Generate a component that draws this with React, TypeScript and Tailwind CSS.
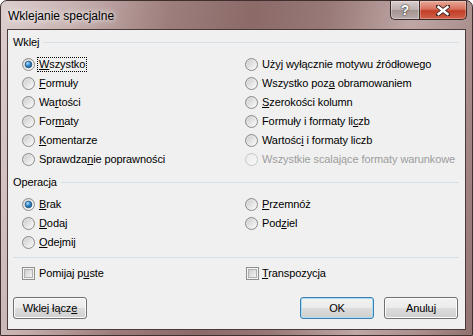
import React, { useId } from 'react';

const FONT = { fontFamily: '"Liberation Sans", Arial, sans-serif' };

function Radio({ checked = false, disabled = false }: { checked?: boolean; disabled?: boolean }) {
  const id = useId();
  return (
    <svg width="13" height="13" viewBox="0 0 13 13" className="shrink-0">
      <defs>
        <linearGradient id={`${id}o`} x1="0" y1="0" x2="1" y2="1">
          <stop offset="0" stopColor={disabled ? '#e8e8e8' : '#d2d2d2'} />
          <stop offset="1" stopColor="#fbfbfb" />
        </linearGradient>
        <linearGradient id={`${id}i`} x1="0" y1="0" x2="1" y2="1">
          <stop offset="0" stopColor={disabled ? '#ececec' : '#cfcfcf'} />
          <stop offset="1" stopColor="#f7f7f7" />
        </linearGradient>
        <radialGradient id={`${id}d`} cx="0.35" cy="0.3" r="0.8">
          <stop offset="0" stopColor="#b6e3fb" />
          <stop offset="0.45" stopColor="#3d8fd0" />
          <stop offset="1" stopColor="#0f4f86" />
        </radialGradient>
      </defs>
      <circle cx="6.5" cy="6.5" r="6" fill={`url(#${id}o)`} stroke={disabled ? '#c6c6c6' : '#8a8a8a'} />
      {checked ? (
        <circle cx="6.5" cy="6.5" r="3.3" fill={`url(#${id}d)`} stroke="#1c4f7d" strokeWidth="0.8" />
      ) : (
        <circle cx="6.5" cy="6.5" r="4" fill={`url(#${id}i)`} />
      )}
    </svg>
  );
}

function Checkbox() {
  const id = useId();
  return (
    <svg width="13" height="13" viewBox="0 0 13 13" className="shrink-0">
      <defs>
        <linearGradient id={id} x1="0" y1="0" x2="1" y2="1">
          <stop offset="0" stopColor="#cbcbcb" />
          <stop offset="1" stopColor="#f6f6f6" />
        </linearGradient>
      </defs>
      <rect x="0.5" y="0.5" width="12" height="12" fill="#f4f4f4" stroke="#8e8f8f" />
      <rect x="2.5" y="2.5" width="8" height="8" fill={`url(#${id})`} stroke="#b0b0b0" />
    </svg>
  );
}

// label with one underlined access key
function L({ pre, k, post }: { pre?: string; k?: string; post?: string }) {
  return (
    <span className="whitespace-nowrap">
      {pre}
      {k && <u>{k}</u>}
      {post}
    </span>
  );
}

function RadioRow({ children, checked, disabled, focus }: { children: React.ReactNode; checked?: boolean; disabled?: boolean; focus?: boolean }) {
  return (
    <div className={`flex h-[19px] items-center ${focus ? 'gap-[2px]' : 'gap-[4px]'} ${disabled ? 'text-[#9d9d9d]' : 'text-black'}`}>
      <Radio checked={checked} disabled={disabled} />
      {focus ? (
        <span className="border border-dotted border-black px-[1px] leading-[13px]">{children}</span>
      ) : (
        children
      )}
    </div>
  );
}

function GroupHeader({ title }: { title: string }) {
  return (
    <div className="flex h-[14px] items-center gap-[4px] pl-[5px] pr-[6px]">
      <span>{title}</span>
      <div className="h-px flex-1 bg-[#d5dfe5]" />
    </div>
  );
}

function WinButton({ children, isDefault }: { children: React.ReactNode; isDefault?: boolean }) {
  return (
    <button
      className={`flex h-[22px] w-[74px] items-center justify-center rounded-[3px] border bg-[linear-gradient(#f2f2f2_0%,#ebebeb_50%,#dddddd_51%,#cfcfcf_100%)] text-black ${
        isDefault
          ? 'border-[#3c7fb1] shadow-[inset_0_0_0_1px_#a9dcf6]'
          : 'border-[#707070] shadow-[inset_0_0_0_1px_#fcfcfc]'
      }`}
    >
      {children}
    </button>
  );
}

export default function App() {
  return (
    <div
      className="flex h-[336px] w-[473px] flex-col rounded-t-[7px] border border-[#3f302f] bg-[linear-gradient(100deg,#dccfce_0%,#c7b2b0_14%,#9d7e7c_32%,#8b6a68_48%,#987977_62%,#bea7a5_78%,#aa8f8d_90%,#917270_100%)] text-[11px] tracking-[-0.1px]"
      style={FONT}
    >
      {/* title bar */}
      <div className="flex h-[28px] shrink-0 items-start">
        <div className="ml-[7px] mt-[6px] text-[12px] tracking-normal text-black [text-shadow:0_0_8px_#fff,0_0_4px_#ffffffcc]">
          Wklejanie specjalne
        </div>
        <div className="ml-auto mr-[5px] flex">
          <div className="flex h-[19px] w-[29px] items-center justify-center rounded-bl-[5px] border border-t-0 border-r-0 border-[#3a2c2b] bg-[linear-gradient(#d9cfce_0%,#bcaeac_50%,#a39391_51%,#b9abaa_100%)] shadow-[inset_0_0_0_1px_#ffffff55]">
            <span className="text-[14px] font-bold leading-none text-white [text-shadow:0_0_1px_#222,0_0_2px_#333]">?</span>
          </div>
          <div className="flex h-[19px] w-[48px] items-center justify-center rounded-br-[5px] border border-t-0 border-[#3a2c2b] bg-[linear-gradient(#e8a898_0%,#d8705c_45%,#c23d25_55%,#d0614b_100%)] shadow-[inset_0_0_0_1px_#ffffff44]">
            <svg width="14" height="11" viewBox="0 0 14 11">
              <path d="M2 1.5 L12 9.5 M12 1.5 L2 9.5" stroke="#3b2522" strokeWidth="4.2" strokeLinecap="square" />
              <path d="M2.5 2 L11.5 9 M11.5 2 L2.5 9" stroke="#ffffff" strokeWidth="2.4" strokeLinecap="square" />
            </svg>
          </div>
        </div>
      </div>

      {/* client area */}
      <div className="mx-[6px] mb-[5px] flex flex-1 flex-col border border-[#4a3a39] bg-[#f0f0f0] text-black">
        <div className="mt-[5px]">
          <GroupHeader title="Wklej" />
        </div>
        <div className="mt-[6px] grid grid-cols-[223px_1fr] pl-[14px]">
          <div className="flex flex-col">
            <RadioRow checked focus><L k="W" post="szystko" /></RadioRow>
            <RadioRow><L k="F" post="ormuły" /></RadioRow>
            <RadioRow><L pre="Wa" k="r" post="tości" /></RadioRow>
            <RadioRow><L pre="For" k="m" post="aty" /></RadioRow>
            <RadioRow><L k="K" post="omentarze" /></RadioRow>
            <RadioRow><L pre="Sprawdza" k="n" post="ie poprawności" /></RadioRow>
          </div>
          <div className="flex flex-col">
            <RadioRow><L pre="Uży" k="j" post=" wyłącznie motywu źródłowego" /></RadioRow>
            <RadioRow><L pre="Wszystko poz" k="a" post=" obramowaniem" /></RadioRow>
            <RadioRow><L k="S" post="zerokości kolumn" /></RadioRow>
            <RadioRow><L pre="Formuły i formaty li" k="c" post="zb" /></RadioRow>
            <RadioRow><L pre="Wartośc" k="i" post=" i formaty liczb" /></RadioRow>
            <RadioRow disabled><L pre="Wszystkie scalające formaty warunkowe" /></RadioRow>
          </div>
        </div>

        <div className="mt-[6px]">
          <GroupHeader title="Operacja" />
        </div>
        <div className="mt-[6px] grid grid-cols-[223px_1fr] pl-[14px]">
          <div className="flex flex-col">
            <RadioRow checked><L k="B" post="rak" /></RadioRow>
            <RadioRow><L k="D" post="odaj" /></RadioRow>
            <RadioRow><L k="O" post="dejmij" /></RadioRow>
          </div>
          <div className="flex flex-col">
            <RadioRow><L k="P" post="rzemnóż" /></RadioRow>
            <RadioRow><L pre="Pod" k="z" post="iel" /></RadioRow>
          </div>
        </div>

        <div className="ml-[5px] mr-[6px] mt-[5px] h-px bg-[#d5dfe5]" />

        <div className="mt-[6px] grid grid-cols-[224px_1fr] pl-[14px]">
          <div className="flex h-[19px] items-center gap-[4px]">
            <Checkbox />
            <L pre="Pomijaj p" k="u" post="ste" />
          </div>
          <div className="flex h-[19px] items-center gap-[3px]">
            <Checkbox />
            <L k="T" post="ranspozycja" />
          </div>
        </div>

        <div className="mt-[14px] flex pl-[5px] pr-[7px]">
          <WinButton><L pre="Wklej łącz" k="e" /></WinButton>
          <div className="ml-auto flex gap-[10px]">
            <WinButton isDefault>OK</WinButton>
            <WinButton>Anuluj</WinButton>
          </div>
        </div>
      </div>
    </div>
  );
}
